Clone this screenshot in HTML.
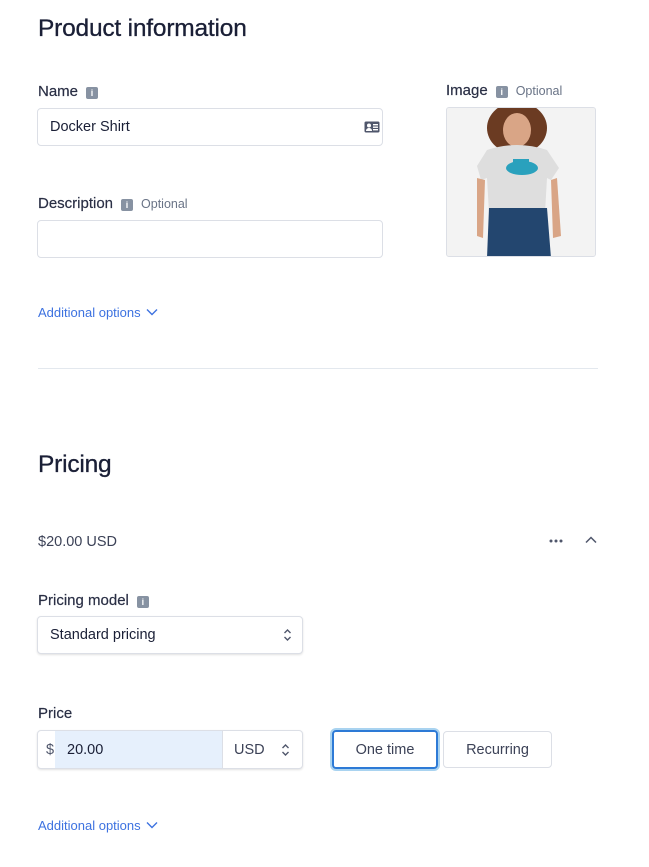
<!DOCTYPE html>
<html><head><style>
*{margin:0;padding:0;box-sizing:border-box}
body{width:649px;height:867px;background:#fff;font-family:"Liberation Sans",sans-serif;color:#1a1f36;position:relative;overflow:hidden}
.a{position:absolute;white-space:nowrap}
h1{position:absolute;font-size:24.5px;font-weight:normal;color:#1a1f36;letter-spacing:-0.2px;-webkit-text-stroke:0.3px #1a1f36}
.lbl2{font-size:15px;color:#2a2f45;-webkit-text-stroke:0.2px #2a2f45}
.opt{font-size:12.5px;color:#697386;-webkit-text-stroke:0}
.i{display:inline-block;width:12px;height:12px;background:#8792a2;border-radius:2px;color:#fff;font-size:9px;font-weight:bold;text-align:center;line-height:12px;vertical-align:0px;margin-left:8px;-webkit-text-stroke:0}
.box{position:absolute;border:1px solid #dcdfe6;border-radius:4px;background:#fff}
.sh{box-shadow:0 1px 2px rgba(0,0,0,.12)}
.link{font-size:13px;color:#3d72e0}
.t{font-size:14.5px;color:#1a1f36}
</style></head><body>
<h1 style="left:38px;top:15px">Product information</h1>
<div class="a lbl2" style="left:38px;top:83px">Name<span class="i">i</span></div>
<div class="box" style="left:37px;top:108px;width:346px;height:38px"></div>
<div class="a t" style="left:50px;top:119px">Docker Shirt</div>
<svg class="a" style="left:364px;top:121px" width="16" height="12" viewBox="0 0 16 12"><rect x="0.5" y="0.5" width="15" height="11" rx="1.5" fill="#4f566b"/><circle cx="5" cy="4.5" r="2" fill="#fff"/><path d="M2 10c0-2 1.5-3 3-3s3 1 3 3z" fill="#fff"/><rect x="9" y="3" width="5" height="1.4" fill="#fff"/><rect x="9" y="5.5" width="5" height="1.4" fill="#fff"/><rect x="9" y="8" width="5" height="1.4" fill="#fff"/></svg>

<div class="a lbl2" style="left:38px;top:195px">Description<span class="i">i</span><span class="opt" style="margin-left:8px">Optional</span></div>
<div class="box" style="left:37px;top:220px;width:346px;height:38px"></div>

<div class="a lbl2" style="left:446px;top:82px">Image<span class="i">i</span><span class="opt" style="margin-left:8px">Optional</span></div>
<div class="a" style="left:446px;top:107px;width:150px;height:150px;border:1px solid #dcdfe6;border-radius:3px;overflow:hidden;background:#f1f1f1">
<svg width="150" height="150" viewBox="0 0 150 150">
<rect width="150" height="150" fill="#f3f3f3"/>
<ellipse cx="70" cy="20" rx="30" ry="26" fill="#6b3b22"/>
<ellipse cx="70" cy="22" rx="14" ry="17" fill="#d9a586"/>
<path d="M40 42 Q70 32 100 42 L112 60 L104 72 L100 70 L98 105 L42 105 L40 70 L34 72 L30 58Z" fill="#dedede"/>
<ellipse cx="75" cy="60" rx="16" ry="7" fill="#2aa1bd"/>
<rect x="66" y="51" width="16" height="6" fill="#2aa1bd"/>
<path d="M42 100 L100 100 L104 150 L40 150Z" fill="#23466f"/>
<path d="M30 70 L38 72 L36 130 L30 128Z" fill="#d9a586"/>
<path d="M104 72 L110 70 L114 128 L106 130Z" fill="#d9a586"/>
</svg></div>

<div class="a link" style="left:38px;top:305px">Additional options <svg width="12" height="8" viewBox="0 0 12 8" style="vertical-align:1px;margin-left:2px"><path d="M1 1.5l5 5 5-5" fill="none" stroke="#3d72e0" stroke-width="1.4"/></svg></div>

<div class="a" style="left:38px;top:368px;width:560px;height:1px;background:#e3e8ee"></div>

<h1 style="left:38px;top:451px">Pricing</h1>
<div class="a t" style="left:38px;top:534px;color:#3c4257">$20.00 USD</div>
<svg class="a" style="left:549px;top:539px" width="14" height="4" viewBox="0 0 14 4"><circle cx="2" cy="2" r="1.5" fill="#4f566b"/><circle cx="7" cy="2" r="1.5" fill="#4f566b"/><circle cx="12" cy="2" r="1.5" fill="#4f566b"/></svg>
<svg class="a" style="left:585px;top:536px" width="12" height="8" viewBox="0 0 12 8"><path d="M1 6.5l5-5 5 5" fill="none" stroke="#4f566b" stroke-width="1.5"/></svg>

<div class="a lbl2" style="left:38px;top:592px">Pricing model<span class="i">i</span></div>
<div class="box sh" style="left:37px;top:616px;width:266px;height:38px"></div>
<div class="a t" style="left:50px;top:627px">Standard pricing</div>
<svg class="a" style="left:283px;top:628px" width="9" height="14" viewBox="0 0 9 14"><path d="M1.5 5l3-3 3 3M1.5 9l3 3 3-3" fill="none" stroke="#4f566b" stroke-width="1.4"/></svg>

<div class="a lbl2" style="left:38px;top:705px">Price</div>
<div class="box sh" style="left:37px;top:730px;width:266px;height:39px;overflow:hidden">
<div class="a" style="left:17px;top:0;width:168px;height:37px;background:#e6f0fc"></div>
<div class="a" style="left:184px;top:0;width:1px;height:37px;background:#dcdfe6"></div>
</div>
<div class="a t" style="left:46px;top:742px;color:#4f566b">$</div>
<div class="a t" style="left:67px;top:742px">20.00</div>
<div class="a t" style="left:234px;top:742px;color:#3c4257">USD</div>
<svg class="a" style="left:281px;top:743px" width="9" height="14" viewBox="0 0 9 14"><path d="M1.5 5l3-3 3 3M1.5 9l3 3 3-3" fill="none" stroke="#4f566b" stroke-width="1.4"/></svg>

<div class="a" style="left:332px;top:730px;width:106px;height:39px;border:2px solid #2d7ad6;border-radius:4px;box-shadow:0 0 0 2px #a9d3f0;text-align:center;line-height:37px;font-size:14.5px;color:#3c4257">One time</div>
<div class="a" style="left:443px;top:731px;width:109px;height:37px;border:1px solid #dcdfe6;border-radius:4px;text-align:center;line-height:37px;font-size:14.5px;color:#3c4257">Recurring</div>

<div class="a link" style="left:38px;top:818px">Additional options <svg width="12" height="8" viewBox="0 0 12 8" style="vertical-align:1px;margin-left:2px"><path d="M1 1.5l5 5 5-5" fill="none" stroke="#3d72e0" stroke-width="1.4"/></svg></div>
</body></html>
